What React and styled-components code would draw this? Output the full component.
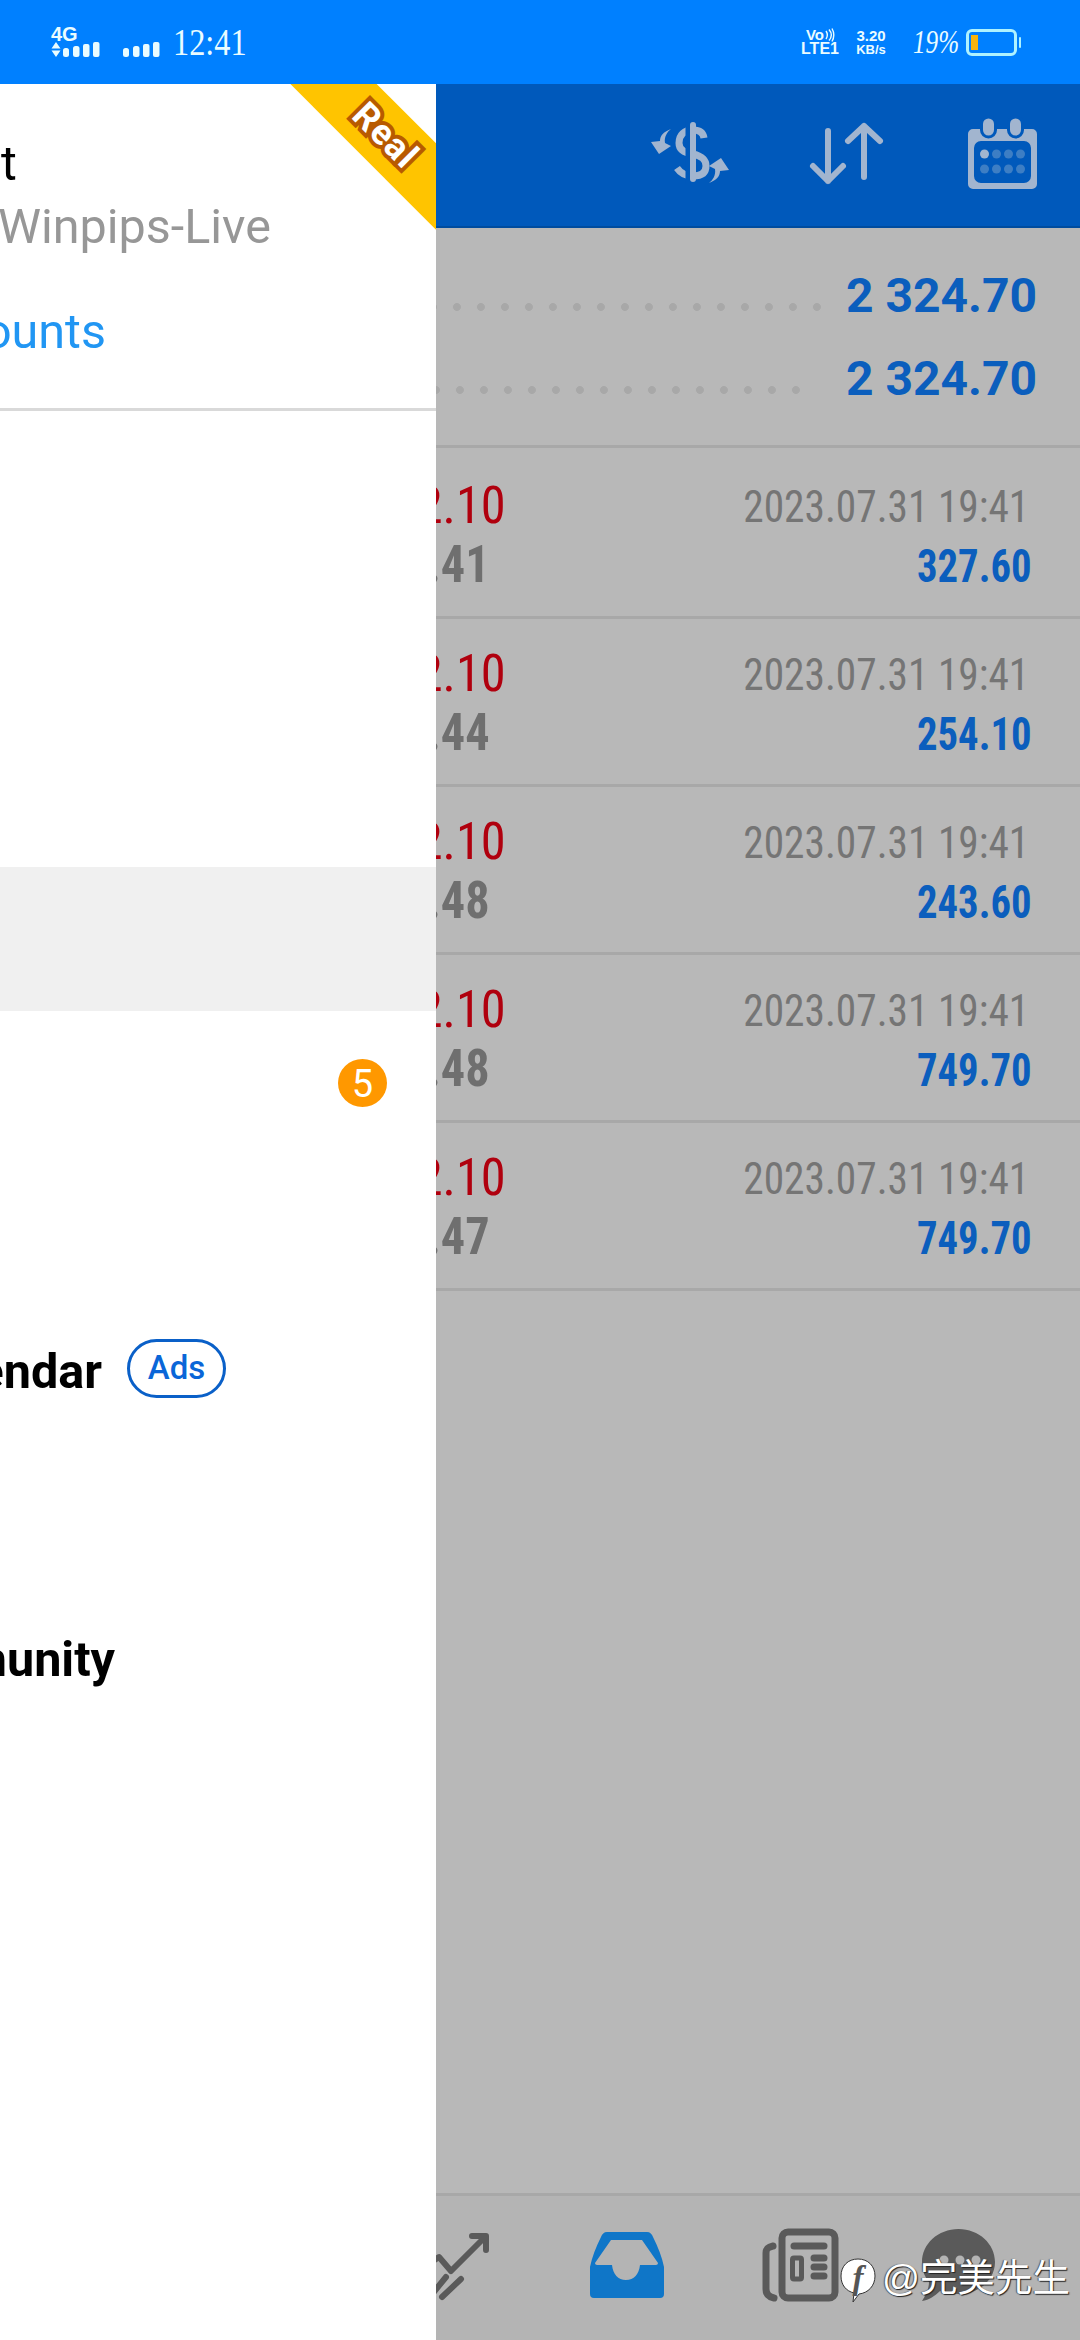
import React from "react";
import styled, { createGlobalStyle } from "styled-components";

const Global = createGlobalStyle`
  html, body { margin: 0; padding: 0; background: #b8b8b8; }
  #root { width: 1080px; height: 2340px; overflow: hidden; }
  * { box-sizing: border-box; }
`;

const Page = styled.div`
  width: 1080px;
  height: 2340px;
  display: flex;
  flex-direction: column;
  position: relative;
  overflow: hidden;
  font-family: Roboto, "Liberation Sans", sans-serif;
`;

/* status bar */
const StatusBar = styled.div`
  height: 84px;
  flex: none;
  background: #0080ff;
  display: flex;
  align-items: center;
  justify-content: space-between;
  padding: 0 63px 0 51px;
  color: #eafcff;
`;
const StatusGroup = styled.div`
  display: flex;
  align-items: center;
`;
const NetBlock = styled.div`
  display: flex;
  flex-direction: column;
  width: 49px;
  margin-right: 23px;
`;
const NetBottom = styled.div`
  display: flex;
  align-items: flex-end;
  gap: 0;
`;
const TinyBold = styled.span`
  font: 700 ${(p) => p.$size || 19}px/${(p) => p.$lh || 15}px "Liberation Sans", sans-serif;
  display: block;
  white-space: nowrap;
`;
const HandText = styled.span`
  font-family: "Liberation Serif", serif;
  font-style: ${(p) => (p.$italic ? "italic" : "normal")};
  font-size: ${(p) => p.$size}px;
  line-height: 1;
  width: ${(p) => p.$w}px;
  margin-left: ${(p) => p.$ml || 0}px;
  transform: scaleX(${(p) => p.$sx || 1});
  transform-origin: left center;
  display: block;
  white-space: nowrap;
`;
const MiniStack = styled.div`
  display: flex;
  flex-direction: column;
  align-items: center;
  margin-left: ${(p) => p.$ml || 0}px;
  width: ${(p) => p.$w}px;
`;
const VoRow = styled.div`
  display: flex;
  align-items: center;
  gap: 1px;
`;
const Battery = styled.div`
  width: 51px;
  height: 27px;
  border: 3px solid #aef2ff;
  border-radius: 6px;
  padding: 3px 2px;
  margin-left: 10px;
  position: relative;
  &::after {
    content: "";
    position: absolute;
    right: -7px;
    top: 5px;
    width: 2px;
    height: 11px;
    background: #aef2ff;
    border-radius: 1px;
  }
`;
const BatteryFill = styled.div`
  width: 7px;
  height: 100%;
  background: #f6b40c;
`;

/* body */
const Body = styled.div`
  flex: 1;
  display: flex;
  min-height: 0;
`;

/* drawer */
const Drawer = styled.aside`
  width: 436px;
  flex: none;
  background: #fff;
  position: relative;
  z-index: 2;
  overflow: hidden;
`;
const DrawerHead = styled.div`
  height: 327px;
  padding-top: 48px;
  border-bottom: 3px solid #d9d9d9;
`;
const Line = styled.div`
  width: ${(p) => p.$end}px;
  height: 63px;
  display: flex;
  justify-content: flex-end;
  flex: none;
  white-space: nowrap;
  font-size: 48.500px;
  line-height: 63px;
  font-weight: ${(p) => p.$weight || 400};
  color: ${(p) => p.$color || "#000"};
  margin-top: ${(p) => p.$mt || 0}px;
`;
const MenuList = styled.div`
  padding-top: 24px;
`;
const MenuRow = styled.div`
  height: 144px;
  display: flex;
  align-items: center;
  padding-right: 49px;
  background: ${(p) => (p.$active ? "#f0f0f0" : "transparent")};
`;
const CountBadge = styled.span`
  width: 49px;
  height: 48px;
  margin-left: auto;
  border-radius: 50%;
  background: #ff9800;
  color: #fff;
  font-size: 38px;
  line-height: 50px;
  text-align: center;
`;
const AdsPill = styled.span`
  width: 99px;
  height: 59px;
  margin: -5px 0 0 25px;
  border: 3px solid #0a60c8;
  border-radius: 30px;
  color: #0a66d8;
  font-size: 33px;
  font-weight: 500;
  line-height: 52px;
  text-align: center;
`;
const Ribbon = styled.div`
  position: absolute;
  left: 233px;
  top: 19px;
  width: 300px;
  height: 61px;
  background: #ffc400;
  transform: rotate(45deg);
  display: flex;
  align-items: center;
  justify-content: center;
`;
const RibbonText = styled.span`
  font-size: 36px;
  font-weight: 700;
  color: #fff;
  -webkit-text-stroke: 8px #b85a00;
  paint-order: stroke fill;
  letter-spacing: 1px;
  margin-left: 6px;
  margin-top: -2px;
`;

/* right pane */
const Pane = styled.main`
  flex: 1;
  min-width: 0;
  display: flex;
  flex-direction: column;
  background: #b8b8b8;
`;
const TopBar = styled.header`
  height: 144px;
  flex: none;
  background: #0059bb;
  border-bottom: 2px solid #004c9e;
  display: flex;
  align-items: center;
  justify-content: flex-end;
  gap: 80px;
  padding: 0 43px 4px 0;
`;
const Summary = styled.section`
  height: 220px;
  flex: none;
  padding-top: 26px;
  border-bottom: 3px solid #a8a8a8;
`;
const SumRow = styled.div`
  height: 83px;
  display: flex;
  padding-right: 43px;
`;
const Leader = styled.div`
  flex: 1;
  height: 8px;
  margin: 49px ${(p) => p.$gap}px 0 0;
  background-image: radial-gradient(circle at center, #a8a8a8 3.6px, transparent 4.2px);
  background-size: 24px 8px;
  background-position: right center;
  background-repeat: repeat-x;
`;
const SumValue = styled.span`
  font-size: 48px;
  font-weight: 700;
  line-height: 83px;
  color: #0b5ebd;
`;
const Trades = styled.div`
  flex: 1;
  padding-top: 3px;
`;
const TradeRow = styled.div`
  height: 168px;
  border-bottom: 3px solid #a8a8a8;
  display: flex;
  justify-content: space-between;
`;
const LeftStack = styled.div`
  width: 70px;
  padding-top: 25px;
  display: flex;
  flex-direction: column;
  align-items: flex-end;
`;
const RightStack = styled.div`
  padding: 27px 48px 0 0;
  display: flex;
  flex-direction: column;
  align-items: flex-end;
`;
const Cond = styled.span`
  display: block;
  white-space: nowrap;
  height: 59px;
  line-height: 59px;
  font-size: ${(p) => p.$size}px;
  font-weight: ${(p) => p.$weight || 400};
  color: ${(p) => p.$color};
  font-stretch: 75%;
  margin-right: ${(p) => p.$mr || 0}px;
  transform: scaleX(${(p) => p.$sx});
  transform-origin: right center;
`;

const BottomBar = styled.nav`
  height: 147px;
  flex: none;
  background: #b4b4b4;
  border-top: 3px solid #a8a8a8;
  display: flex;
  align-items: center;
  padding-bottom: 6px;
`;
const Tab = styled.div`
  margin-left: ${(p) => p.$ml || 0}px;
  display: flex;
  flex: none;
`;
const Svg = styled.svg`
  display: block;
  overflow: visible;
`;
const SignalSvg = styled(Svg)`
  margin-top: 15px;
`;

/* watermark */
const Watermark = styled.div`
  position: absolute;
  left: 840px;
  top: 2258px;
  display: flex;
  align-items: flex-start;
  gap: 6px;
  z-index: 3;
`;
const WatermarkText = styled.span`
  font-family: "Liberation Sans", "Noto Sans CJK SC", sans-serif;
  font-size: 37.500px;
  line-height: 40px;
  color: #fff;
  text-shadow: 1px 1px 1px #222, -1px 0 1px #555;
  white-space: nowrap;
`;

const ICON = "#a2b5cf";
const DARK = "#5a5a5a";
const WHITE = "#eafcff";

const Bars = () => (
  <g fill={WHITE}>
    <rect x="0" y="6" width="6" height="9" rx="2.5" />
    <rect x="10" y="4" width="6.5" height="11" rx="2.5" />
    <rect x="20" y="2" width="6.5" height="13" rx="2" />
    <rect x="30" y="0" width="6.5" height="15" rx="2" />
  </g>
);

const SwapIcon = () => (
  <Svg width="78" height="62" viewBox="0 0 78 62">
    <path d="M53 16C52 9 46 8 42 8C33 8 28 13 28 21C28 28 34 31 42 32C50 34 55 37 55 44C55 51 50 54 42 54C36 54 30 52 26 46" fill="none" stroke={ICON} strokeWidth="7" />
    <rect x="34.5" y="-2" width="5" height="64" fill="#0059bb" />
    <rect x="39" y="0" width="6" height="60" rx="3" fill={ICON} />
    <g fill={ICON}>
      <path d="M20 7C12 10 9 14 9 19L0 20L8 32L20 24L14 21C13 15 16 10 20 7Z" />
      <path transform="rotate(180 39 34)" d="M20 7C12 10 9 14 9 19L0 20L8 32L20 24L14 21C13 15 16 10 20 7Z" />
    </g>
  </Svg>
);

const SortIcon = () => (
  <Svg width="79" height="63" viewBox="0 0 79 63">
    <g fill="none" stroke={ICON} strokeWidth="6" strokeLinecap="round" strokeLinejoin="round">
      <path d="M19 9V59M4 44L19 59L34 44" />
      <path d="M55 55V4M39 19L55 4L71 19" />
    </g>
  </Svg>
);

const CalendarIcon = () => (
  <Svg width="69" height="71" viewBox="0 0 69 71">
    <path fillRule="evenodd" fill={ICON} d="M5 11H64A5 5 0 0 1 69 16V66A5 5 0 0 1 64 71H5A5 5 0 0 1 0 66V16A5 5 0 0 1 5 11ZM13 23A7 7 0 0 0 6 30V58A7 7 0 0 0 13 65H56A7 7 0 0 0 63 58V30A7 7 0 0 0 56 23Z" />
    <g fill={ICON} stroke="#0059bb" strokeWidth="3">
      <rect x="13.5" y="-1" width="14" height="20" rx="7" />
      <rect x="40.5" y="-1" width="14" height="20" rx="7" />
    </g>
    <g fill="#3d7ec4">
      <circle cx="16.5" cy="36" r="4.5" fill={ICON} />
      <circle cx="28.5" cy="36" r="4.5" />
      <circle cx="40.5" cy="36" r="4.5" />
      <circle cx="52.5" cy="36" r="4.5" />
      <circle cx="16.5" cy="51" r="4.5" />
      <circle cx="28.5" cy="51" r="4.5" />
      <circle cx="40.5" cy="51" r="4.5" />
      <circle cx="52.5" cy="51" r="4.5" />
    </g>
  </Svg>
);

const ChartIcon = () => (
  <Svg width="53" height="65" viewBox="0 0 53 65">
    <g fill="none" stroke={DARK} strokeWidth="6" strokeLinejoin="round">
      <path d="M-6 30L3 24L15 38L48 5" />
      <path d="M36 3H50V17" strokeLinecap="round" />
      <path d="M-3 60L10 44M6 64L25 46" strokeLinecap="round" />
    </g>
  </Svg>
);

const InboxIcon = () => (
  <Svg width="74" height="66" viewBox="0 0 74 66">
    <path
      fillRule="evenodd"
      fill="#0f76c8"
      d="M17 0H57C60 0 62 2 63 5C68 15 72 25 74 35V62A4 4 0 0 1 70 66H4A4 4 0 0 1 0 62V35C2 25 6 15 11 5C12 2 14 0 17 0ZM21 8L5 31C5 32 6 33 7 33H22C23 42 28 48 36 48C44 48 49 42 50 33H66C67 33 68 32 68 31L52 8Z"
    />
  </Svg>
);

const NewsIcon = () => (
  <Svg width="76" height="72" viewBox="0 0 76 72">
    <g fill="none" stroke={DARK} strokeLinecap="round">
      <rect x="20" y="3" width="53" height="66" rx="6" strokeWidth="7" />
      <path d="M11 17C6 18 4 20 4 24V60C4 65 7 68 12 69" strokeWidth="7" />
      <path d="M32 17H62" strokeWidth="7" />
      <rect x="30.5" y="29" width="9" height="21" rx="1.5" strokeWidth="5" />
      <path d="M52 29H62M52 38H62M52 47H62" strokeWidth="7" />
    </g>
  </Svg>
);

const ChatIcon = () => (
  <Svg width="73" height="72" viewBox="0 0 73 72">
    <path fill={DARK} d="M36.5 0C57 0 73 15 73 33C73 51 57 65 36.5 65C30 65 24 64 18 62C13 67 7 71 0 72C4 66 7 60 7 53C2 47 0 40 0 33C0 15 16 0 36.5 0Z" />
    <g fill="#b4b4b4">
      <circle cx="22" cy="31" r="4.5" />
      <circle cx="38" cy="31" r="4.5" />
      <circle cx="54" cy="31" r="4.5" />
    </g>
  </Svg>
);

const WatermarkLogo = () => (
  <Svg width="36" height="45" viewBox="0 0 36 45">
    <path fill="#fff" stroke="#333" strokeWidth="1" d="M18 1C28 1 35 8 35 18C35 28 28 35 19 36L13 44L14 35C6 33 1 27 1 18C1 8 8 1 18 1Z" />
    <text x="18" y="31" textAnchor="middle" fontFamily="Liberation Serif" fontStyle="italic" fontWeight="700" fontSize="33" fill="#555">f</text>
  </Svg>
);

const trades = [
  { a: ".41", v: "327.60" },
  { a: ".44", v: "254.10" },
  { a: ".48", v: "243.60" },
  { a: ".48", v: "749.70" },
  { a: ".47", v: "749.70" },
];

export default function App() {
  return (
    <Page>
      <Global />
      <StatusBar>
        <StatusGroup>
          <NetBlock>
            <TinyBold $size={20} $lh={15}>4G</TinyBold>
            <NetBottom>
              <Svg width="12" height="15" viewBox="0 0 12 15">
                <path d="M5 0L9.500 6.500H0.500ZM5 15L0.500 8.500H9.500Z" fill={WHITE} />
              </Svg>
              <Svg width="37" height="15" viewBox="0 0 37 15"><Bars /></Svg>
            </NetBottom>
          </NetBlock>
          <SignalSvg width="37" height="15" viewBox="0 0 37 15"><Bars /></SignalSvg>
          <HandText $size={38} $w={74} $ml={13} $sx={0.85}>12:41</HandText>
        </StatusGroup>
        <StatusGroup>
          <MiniStack $w={34}>
            <VoRow>
              <TinyBold $size={15} $lh={14}>Vo</TinyBold>
              <Svg width="9" height="14" viewBox="0 0 9 14">
                <path d="M1 3C3 6 3 8 1 11M4 1.500C7 5 7 9 4 12.500M7 0.500C9.500 5 9.500 9 7 13.500" fill="none" stroke={WHITE} strokeWidth="1.400" />
              </Svg>
            </VoRow>
            <TinyBold $size={16} $lh={14}>LTE1</TinyBold>
          </MiniStack>
          <MiniStack $w={30} $ml={19}>
            <TinyBold $size={15} $lh={15}>3.20</TinyBold>
            <TinyBold $size={13} $lh={13}>KB/s</TinyBold>
          </MiniStack>
          <HandText $size={34} $w={43} $ml={27} $italic $sx={0.74}>19%</HandText>
          <Battery><BatteryFill /></Battery>
        </StatusGroup>
      </StatusBar>
      <Body>
        <Drawer>
          <Ribbon><RibbonText>Real</RibbonText></Ribbon>
          <DrawerHead>
            <Line $end={17}>Account</Line>
            <Line $end={271} $color="#979797">Winpips-Live</Line>
            <Line $end={106} $color="#2196f3" $mt={42}>Manage accounts</Line>
          </DrawerHead>
          <MenuList>
            <MenuRow />
            <MenuRow />
            <MenuRow />
            <MenuRow $active />
            <MenuRow><CountBadge>5</CountBadge></MenuRow>
            <MenuRow />
            <MenuRow>
              <Line $end={102} $weight={700}>Economic Calendar</Line>
              <AdsPill>Ads</AdsPill>
            </MenuRow>
            <MenuRow />
            <MenuRow>
              <Line $end={115} $weight={700}>Traders Community</Line>
            </MenuRow>
          </MenuList>
        </Drawer>
        <Pane>
          <TopBar>
            <SwapIcon />
            <SortIcon />
            <CalendarIcon />
          </TopBar>
          <Summary>
            <SumRow><Leader $gap={17} /><SumValue>2 324.70</SumValue></SumRow>
            <SumRow><Leader $gap={38} /><SumValue>2 324.70</SumValue></SumRow>
          </Summary>
          <Trades>
            {trades.map((t, i) => (
              <TradeRow key={i}>
                <LeftStack>
                  <Cond $size={52} $color="#b0000e" $sx={0.97}>2.10</Cond>
                  <Cond $size={52} $weight={700} $color="#6f6f6f" $mr={16} $sx={0.93}>{t.a}</Cond>
                </LeftStack>
                <RightStack>
                  <Cond $size={44} $color="#757575" $mr={3} $sx={0.94}>2023.07.31 19:41</Cond>
                  <Cond $size={46} $weight={700} $color="#0b5ebd" $sx={0.885}>{t.v}</Cond>
                </RightStack>
              </TradeRow>
            ))}
          </Trades>
          <BottomBar>
            <Tab><ChartIcon /></Tab>
            <Tab $ml={101}><InboxIcon /></Tab>
            <Tab $ml={98}><NewsIcon /></Tab>
            <Tab $ml={84}><ChatIcon /></Tab>
          </BottomBar>
        </Pane>
      </Body>
      <Watermark>
        <WatermarkLogo />
        <WatermarkText>@完美先生</WatermarkText>
      </Watermark>
    </Page>
  );
}
